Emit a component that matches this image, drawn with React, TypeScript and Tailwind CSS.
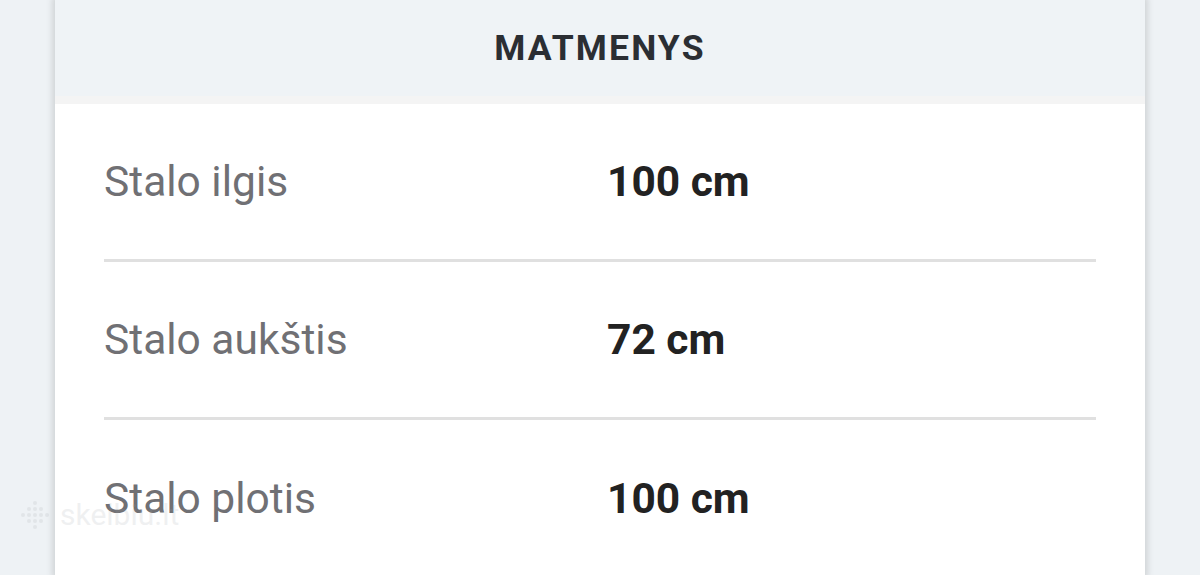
import React from 'react';

interface Spec {
    label: string;
    value: string;
}

const specs: Spec[] = [
    { label: 'Stalo ilgis', value: '100 cm' },
    { label: 'Stalo aukštis', value: '72 cm' },
    { label: 'Stalo plotis', value: '100 cm' },
];

const App: React.FC = () => {
    return (
        <div
            className="relative h-[575px] w-[1200px] overflow-hidden bg-[#eef2f5]"
            style={{ fontFamily: 'Roboto, "Liberation Sans", sans-serif' }}
        >
            <div className="ml-[55px] h-full w-[1090px] bg-white shadow-[0_0_6px_3px_rgba(0,0,0,0.12)]">
                <div className="flex h-[96px] items-center justify-center bg-[#eff3f6] pt-[2px]">
                    <h2 className="text-[35.5px] font-bold tracking-[0.06em] text-[#2b2e33]">MATMENYS</h2>
                </div>
                <div className="h-[8px] bg-[#f4f4f4]" />
                <div className="px-[49px]">
                    {specs.map((spec, i) => (
                        <div
                            key={spec.label}
                            className={
                                i < specs.length - 1
                                    ? 'flex h-[158px] items-center border-b-[3px] border-[#e0e0e0]'
                                    : 'flex h-[158px] items-center'
                            }
                        >
                            <div className="w-[503px] text-[42.5px] text-[#707074]">{spec.label}</div>
                            <div className="text-[42.5px] font-bold text-[#222222]">{spec.value}</div>
                        </div>
                    ))}
                </div>
            </div>

            {/* watermark */}
            <div className="pointer-events-none absolute left-[20px] top-[492px] flex items-center gap-[10px] opacity-15">
                <svg width="30" height="30" viewBox="0 0 30 30" fill="#9aa0a6">
                    {[0, 1, 2, 3, 4].map((r) =>
                        [0, 1, 2, 3, 4].map((c) =>
                            Math.abs(r - 2) + Math.abs(c - 2) <= 2 ? (
                                <circle key={`${r}-${c}`} cx={3 + c * 6} cy={3 + r * 6} r="2" />
                            ) : null
                        )
                    )}
                </svg>
                <span className="text-[30px] text-[#9aa0a6]">skelbiu.lt</span>
            </div>
        </div>
    );
};

export default App;
